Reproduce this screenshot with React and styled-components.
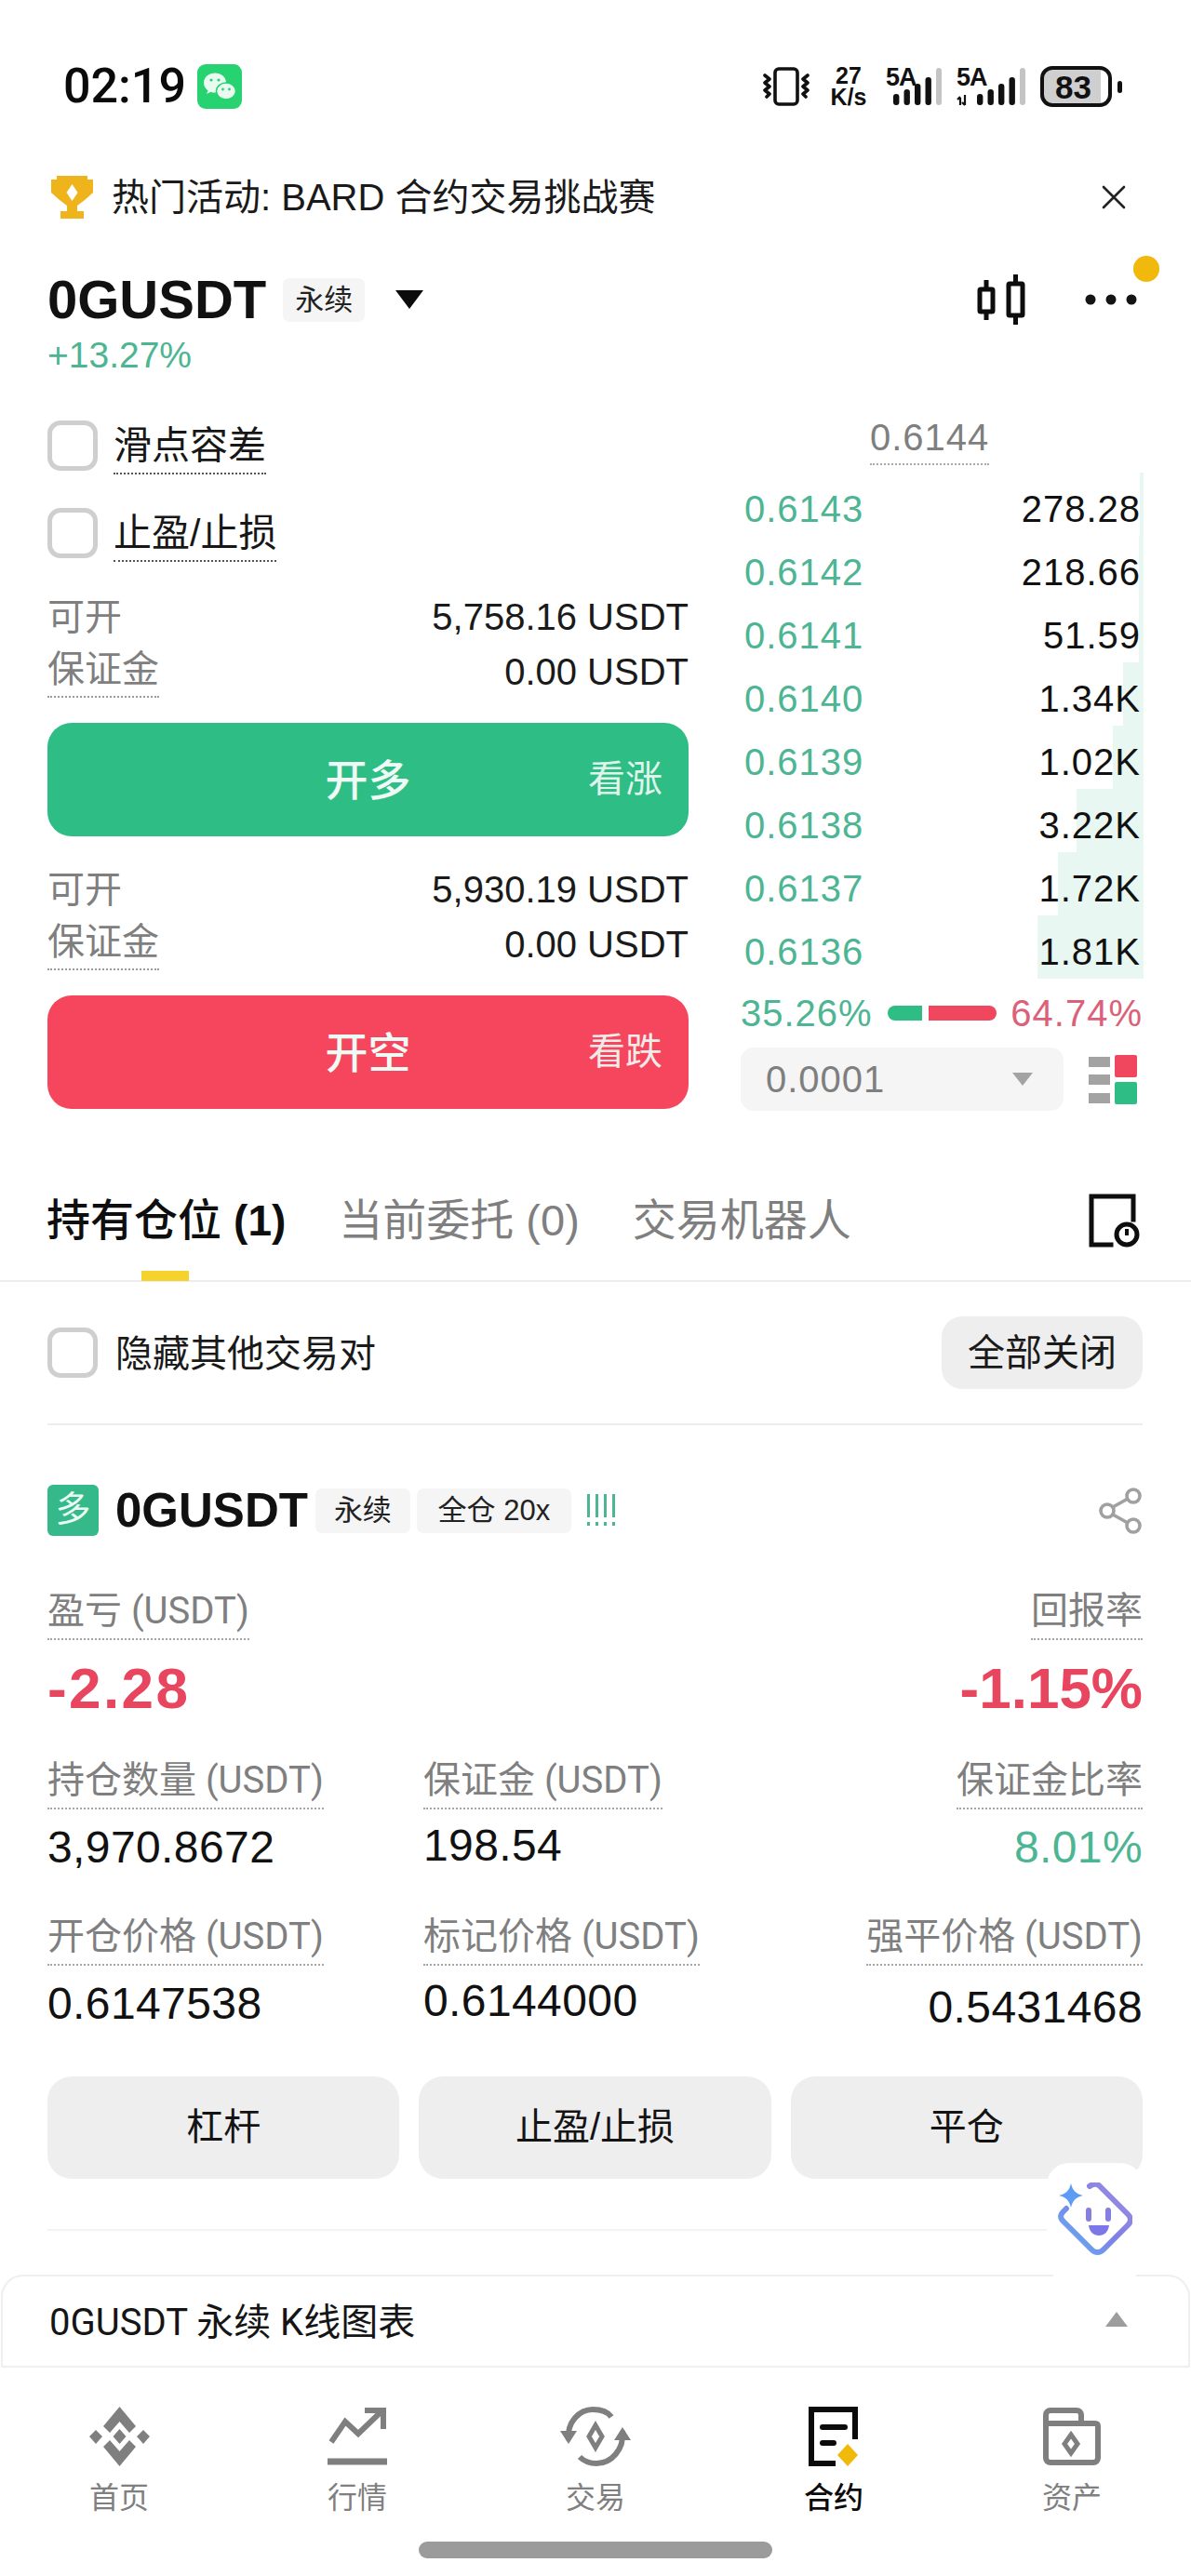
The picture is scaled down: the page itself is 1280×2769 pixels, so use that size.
import React from "react";
import styled, { createGlobalStyle } from "styled-components";

const FONT = `"Liberation Sans", "Noto Sans CJK SC", sans-serif`;
const NARROW = `Roboto, "Noto Sans CJK SC", sans-serif`;
const GRAY = "#7f7f7f";
const INK = "#111111";
const GREEN_TEXT = "#4db593";
const GREEN = "#2ebd85";
const RED = "#f6465d";

const Global = createGlobalStyle`
  html, body { margin: 0; padding: 0; background: #fff; }
  * { box-sizing: border-box; }
  body { font-family: ${FONT}; color: ${INK}; }
`;

const Page = styled.div`
  position: relative;
  width: 1280px;
  height: 2769px;
  overflow: hidden;
  background: #fff;
`;

/* status bar */
const StatusBar = styled.div`
  height: 186px;
  padding: 0 74px 0 68px;
  display: flex;
  align-items: center;
  justify-content: space-between;
`;
const TimeGroup = styled.div`
  display: flex;
  align-items: center;
  gap: 12px;
`;
const Time = styled.div`
  font-family: Roboto, sans-serif;
  font-size: 52px;
  font-weight: 500;
  line-height: 52px;
  color: #0a0a0a;
`;
const StatusIcons = styled.div`
  display: flex;
  align-items: center;
  height: 48px;
`;
const Speed = styled.div`
  width: 44px;
  margin: 0 18px 0 20px;
  text-align: center;
  font-size: 25px;
  font-weight: 700;
  line-height: 23px;
  white-space: nowrap;
`;
const SignalGroup = styled.div`
  position: relative;
  width: ${(p) => p.$w}px;
  height: 44px;
  margin-right: ${(p) => p.$mr}px;
`;
const SignalLabel = styled.span`
  position: absolute;
  left: 0;
  top: 0;
  font-size: 27px;
  font-weight: 700;
  line-height: 25px;
  letter-spacing: -1px;
`;
const Battery = styled.div`
  width: 77px;
  height: 44px;
  border: 4px solid #111;
  border-radius: 13px;
  background: linear-gradient(90deg, #cfcfcf 88%, #fff 88%);
  display: flex;
  align-items: center;
  justify-content: center;
  font-size: 35px;
  font-weight: 700;
  line-height: 1;
  padding-right: 6px;
`;
const BatteryTip = styled.div`
  width: 5px;
  height: 13px;
  margin-left: 6px;
  border-radius: 3px;
  background: #111;
`;

/* banner */
const Banner = styled.div`
  height: 52px;
  padding: 0 70px 0 55px;
  display: flex;
  align-items: center;
`;
const BannerText = styled.div`
  margin-left: 20px;
  font-size: 40px;
  line-height: 52px;
  color: #1a1a1a;
  white-space: nowrap;
`;
const BannerClose = styled.div`
  margin-left: auto;
  display: flex;
`;

/* title */
const TitleRow = styled.div`
  position: relative;
  height: 80px;
  margin-top: 44px;
  padding: 0 58px 0 51px;
  display: flex;
  align-items: center;
`;
const Symbol = styled.div`
  font-size: 58px;
  font-weight: 700;
  line-height: 60px;
`;
const MarketBadge = styled.div`
  margin-left: 18px;
  width: 88px;
  height: 47px;
  border-radius: 7px;
  background: #f5f5f5;
  font-size: 31px;
  line-height: 47px;
  text-align: center;
  color: #222;
`;
const Caret = styled.div`
  margin-left: 33px;
  width: 0;
  height: 0;
  border-left: 15px solid transparent;
  border-right: 15px solid transparent;
  border-top: 20px solid #0b0b0b;
`;
const TitleActions = styled.div`
  margin-left: auto;
  display: flex;
  align-items: center;
  gap: 64px;
`;
const NoticeDot = styled.div`
  position: absolute;
  left: 1218px;
  top: -7px;
  width: 28px;
  height: 28px;
  border-radius: 50%;
  background: #f0b90b;
`;
const Change = styled.div`
  height: 40px;
  padding-left: 51px;
  font-size: 39px;
  line-height: 40px;
  color: ${GREEN_TEXT};
`;

/* trade */
const TradeGrid = styled.div`
  margin-top: 50px;
  padding: 0 52px 0 51px;
  display: grid;
  grid-template-columns: 689px 432px;
  column-gap: 56px;
`;
const FormColumn = styled.div`
  display: flex;
  flex-direction: column;
`;
const CheckRow = styled.div`
  display: flex;
  align-items: flex-start;
  height: 54px;
  margin-bottom: ${(p) => p.$mb || 0}px;
`;
const Checkbox = styled.div`
  flex: none;
  width: 54px;
  height: 54px;
  border: 5px solid #cfcfcf;
  border-radius: 14px;
  background: #fff;
`;
const CheckLabel = styled.span`
  margin: 6px 0 0 17px;
  height: 52px;
  font-size: 41px;
  line-height: 42px;
  border-bottom: 2px dotted #555;
  color: #171717;
  white-space: nowrap;
`;
const InfoRow = styled.div`
  display: flex;
  align-items: flex-start;
  justify-content: space-between;
  height: ${(p) => p.$h}px;
`;
const InfoLabel = styled.span`
  font-size: 40px;
  line-height: 40px;
  color: ${GRAY};
  ${(p) => p.$dotted && `padding-bottom: 9px; border-bottom: 2px dotted #9a9a9a;`}
`;
const InfoValue = styled.span`
  font-size: 40px;
  line-height: 40px;
  color: #1a1a1a;
  margin-top: ${(p) => p.$top || 0}px;
`;
const TradeButton = styled.div`
  position: relative;
  height: 122px;
  margin-bottom: ${(p) => p.$mb || 0}px;
  padding-bottom: 7px;
  border-radius: 26px;
  background: ${(p) => p.$bg};
  display: flex;
  align-items: center;
  justify-content: center;
  color: #eefaf5;
  font-size: 46px;
  font-weight: 500;
`;
const TradeHint = styled.span`
  position: absolute;
  right: 28px;
  top: 38px;
  font-size: 40px;
  font-weight: 400;
  line-height: 44px;
  opacity: 0.92;
`;

/* order book */
const BookColumn = styled.div`
  display: flex;
  flex-direction: column;
`;
const MidWrap = styled.div`
  height: 56px;
  padding-left: 139px;
`;
const MidPrice = styled.span`
  display: inline-block;
  font-size: 40px;
  line-height: 36px;
  letter-spacing: 1px;
  color: ${GRAY};
  padding-bottom: 10px;
  border-bottom: 2px dotted #aaa;
`;
const BookRow = styled.div`
  position: relative;
  height: 68px;
  padding: 10px 2px 0 4px;
  display: flex;
  align-items: center;
  justify-content: space-between;
  font-size: 40px;
  letter-spacing: 1px;
`;
const DepthBar = styled.div`
  position: absolute;
  top: 0;
  bottom: 0;
  right: -1px;
  background: #e9f7f2;
`;
const BookCell = styled.span`
  position: relative;
  color: ${(p) => p.$color};
`;
const RatioRow = styled.div`
  height: 74px;
  display: flex;
  align-items: center;
  font-size: 40px;
`;
const RatioText = styled.span`
  margin-left: ${(p) => p.$ml || 0}px;
  color: ${(p) => p.$color};
  letter-spacing: 1px;
`;
const RatioBar = styled.div`
  width: ${(p) => p.$w}px;
  height: 16px;
  margin-left: ${(p) => p.$ml}px;
  background: ${(p) => p.$bg};
  border-radius: ${(p) => p.$radius};
`;
const SelectRow = styled.div`
  display: flex;
  align-items: center;
  justify-content: space-between;
  height: 68px;
  padding-right: 6px;
`;
const Select = styled.div`
  width: 347px;
  height: 68px;
  padding: 0 33px 0 27px;
  border-radius: 14px;
  background: #f5f5f5;
  display: flex;
  align-items: center;
  justify-content: space-between;
  font-size: 40px;
  letter-spacing: 1px;
  color: ${GRAY};
`;
const SelectCaret = styled.div`
  width: 0;
  height: 0;
  border-left: 11px solid transparent;
  border-right: 11px solid transparent;
  border-top: 14px solid #a3a3a3;
`;

/* tabs */
const TabsRow = styled.div`
  position: relative;
  height: 98px;
  margin-top: 86px;
  padding: 0 55px 33px 50px;
  border-bottom: 2px solid #ededed;
  display: flex;
  align-items: center;
  gap: 57px;
`;
const Tab = styled.div`
  font-size: 47px;
  line-height: 60px;
  font-weight: ${(p) => (p.$active ? 500 : 400)};
  color: ${(p) => (p.$active ? "#0e0e0e" : GRAY)};
  white-space: nowrap;
`;
const TabCount = styled.span`
  font-weight: 700;
  font-size: 46px;
`;
const TabIndicator = styled.div`
  position: absolute;
  left: 152px;
  bottom: -1px;
  width: 51px;
  height: 11px;
  background: #f5d22c;
`;
const TabAction = styled.div`
  margin-left: auto;
  display: flex;
`;

const HideRow = styled.div`
  height: 154px;
  margin: 0 52px 0 51px;
  border-bottom: 2px solid #ededed;
  display: flex;
  align-items: center;
  justify-content: space-between;
`;
const HideLeft = styled.div`
  display: flex;
  align-items: center;
`;
const HideText = styled.span`
  margin-left: 19px;
  font-size: 40px;
  margin-top: -4px;
  color: #1a1a1a;
`;
const CloseAll = styled.div`
  width: 216px;
  height: 78px;
  border-radius: 22px;
  background: #eeeeee;
  text-align: center;
  line-height: 78px;
  font-size: 40px;
  color: #1a1a1a;
`;

/* position */
const PositionCard = styled.div`
  padding: 64px 52px 0 51px;
`;
const PosHeader = styled.div`
  height: 55px;
  display: flex;
  align-items: center;
`;
const SideTag = styled.div`
  width: 55px;
  height: 55px;
  border-radius: 6px;
  background: #35b98a;
  color: #e9fbf3;
  font-size: 38px;
  line-height: 53px;
  text-align: center;
`;
const PosSymbol = styled.div`
  margin-left: 18px;
  font-size: 51px;
  font-weight: 700;
  line-height: 55px;
`;
const PosBadge = styled.div`
  margin-left: ${(p) => p.$ml}px;
  width: ${(p) => p.$w}px;
  height: 48px;
  border-radius: 7px;
  background: #f5f5f5;
  text-align: center;
  font-size: 31px;
  line-height: 47px;
  color: #222;
  white-space: nowrap;
`;
const Bang = styled.div`
  margin-left: 17px;
  display: flex;
  gap: 6px;
  height: 35px;
`;
const BangMark = styled.span`
  position: relative;
  width: 3px;
  height: 25px;
  background: ${GREEN_TEXT};
  &::after {
    content: "";
    position: absolute;
    left: 0;
    top: 30px;
    width: 3px;
    height: 4px;
    background: ${GREEN_TEXT};
  }
`;
const PosShare = styled.div`
  margin-left: auto;
  display: flex;
`;
const StatGrid = styled.div`
  margin-top: 61px;
  display: grid;
  grid-template-columns: 404px 1fr 1fr;
  row-gap: 49px;
`;
const StatCell = styled.div`
  display: flex;
  flex-direction: column;
  align-items: ${(p) => (p.$end ? "flex-end" : "flex-start")};
  grid-column: ${(p) => p.$col || "auto"};
`;
const StatLabel = styled.span`
  font-family: ${NARROW};
  font-size: 40px;
  line-height: 40px;
  padding-bottom: 9px;
  border-bottom: 2px dotted #a5a5a5;
  color: ${GRAY};
  white-space: nowrap;
`;
const BigValue = styled.span`
  margin-top: 22px;
  font-size: 62px;
  font-weight: 700;
  line-height: 60px;
  letter-spacing: ${(p) => p.$spread || 0}px;
  color: #e8455f;
`;
const StatValue = styled.span`
  margin-top: ${(p) => 14 + (p.$shift || 0)}px;
  margin-bottom: ${(p) => -(p.$shift || 0)}px;
  font-size: 48px;
  line-height: 54px;
  letter-spacing: 0.4px;
  color: ${(p) => p.$color || INK};
`;
const ActionGrid = styled.div`
  margin-top: 51px;
  display: grid;
  grid-template-columns: repeat(3, 1fr);
  column-gap: 21px;
`;
const ActionButton = styled.div`
  height: 110px;
  border-radius: 26px;
  background: #eeeeee;
  text-align: center;
  line-height: 108px;
  font-size: 40px;
  color: #141414;
`;
const Divider = styled.div`
  height: 2px;
  margin-top: 54px;
  background: #f3f3f3;
`;

const FloatAssist = styled.div`
  position: absolute;
  left: 1125px;
  top: 2325px;
  width: 103px;
  height: 128px;
  border-radius: 24px;
  background: #fff;
  display: flex;
  justify-content: center;
  padding-top: 21px;
`;

/* chart panel */
const ChartPanel = styled.div`
  height: 100px;
  margin: 47px 1px 0;
  padding: 0 65px 5px 50px;
  border: 2px solid #efefef;
  border-radius: 24px 24px 0 0;
  display: flex;
  align-items: center;
  justify-content: space-between;
  font-family: ${NARROW};
  font-size: 40px;
  color: #151515;
`;
const PanelCaret = styled.div`
  width: 0;
  height: 0;
  border-left: 12px solid transparent;
  border-right: 12px solid transparent;
  border-bottom: 16px solid #9d9d9d;
`;

/* nav */
const NavBar = styled.div`
  padding-top: 42px;
  display: grid;
  grid-template-columns: repeat(5, 1fr);
`;
const NavItem = styled.div`
  display: flex;
  flex-direction: column;
  align-items: center;
  color: ${(p) => (p.$active ? "#0b0b0b" : GRAY)};
  font-size: 32px;
  font-weight: ${(p) => (p.$active ? 500 : 400)};
  line-height: 36px;
`;
const NavIcon = styled.div`
  height: 66px;
  margin-bottom: 14px;
  display: flex;
  align-items: flex-start;
`;
const HomeBar = styled.div`
  width: 380px;
  height: 18px;
  margin: 29px auto 0;
  border-radius: 9px;
  background: #9b9b9b;
`;

/* drawings */
const Wechat = () => (
  <svg width="48" height="48" viewBox="0 0 48 48">
    <rect width="48" height="48" rx="9" fill="#27d271" />
    <ellipse cx="19" cy="20" rx="12" ry="10.5" fill="#e9fbf0" />
    <path d="M12 27l-2 5 6-3z" fill="#e9fbf0" />
    <ellipse cx="31" cy="29" rx="10.5" ry="9" fill="#e9fbf0" stroke="#27d271" strokeWidth="1.5" />
    <circle cx="15" cy="17" r="1.6" fill="#27d271" />
    <circle cx="23" cy="17" r="1.6" fill="#27d271" />
    <circle cx="27.5" cy="27" r="1.4" fill="#27d271" />
    <circle cx="34.5" cy="27" r="1.4" fill="#27d271" />
  </svg>
);
const Vibrate = () => (
  <svg width="50" height="42" viewBox="0 0 50 42" fill="none" stroke="#111" strokeWidth="3.6" strokeLinecap="round" strokeLinejoin="round">
    <rect x="13" y="2" width="24" height="38" rx="4" />
    <path d="M2 9l5 4-5 4 5 4-5 4 5 4-3 3" />
    <path d="M48 9l-5 4 5 4-5 4 5 4-5 4 3 3" />
  </svg>
);
const Bars = ({ offset = 8, arrows = false }) => {
  const hs = [12, 17, 23, 30];
  return (
    <svg width="78" height="44" viewBox="0 0 78 44" style={{ position: "absolute", left: 0, top: 0 }}>
      {arrows && <path d="M4 34v8M9 31v11M9 42l-3-3M1 36l3-3" stroke="#111" strokeWidth="2.2" fill="none" />}
      {hs.map((h, i) => (
        <rect key={i} x={offset + i * 11.5} y={42 - h} width="6.4" height={h} rx="3" fill="#111" />
      ))}
      <rect x={offset + 46} y="2" width="6" height="40" rx="3" fill="#c4c4c4" />
    </svg>
  );
};
const Trophy = () => (
  <svg width="45" height="46" viewBox="0 0 45 46">
    <path d="M6 0h33v4h6v14l-9 8-8 6v6h7v8H10v-8h7v-6l-8-6-9-8V4h6z" fill="#efb31c" />
    <path d="M22.5 9l6 9-6 9-6-9z" fill="#fff" />
  </svg>
);
const Close = () => (
  <svg width="26" height="26" viewBox="0 0 26 26" stroke="#222" strokeWidth="2.6" strokeLinecap="round">
    <path d="M2 2l22 22M24 2L2 24" />
  </svg>
);
const Candles = () => (
  <svg width="52" height="54" viewBox="0 0 52 54" fill="none" stroke="#0d0d0d" strokeWidth="5">
    <rect x="3" y="16" width="14" height="24" rx="1" />
    <rect x="34" y="10" width="15" height="34" rx="1" />
    <path d="M10 6v10M10 40v9M41.500 0v10M41.500 44v10" />
  </svg>
);
const Dots = () => (
  <svg width="56" height="14" viewBox="0 0 56 14" fill="#141414">
    <circle cx="6" cy="7" r="5.500" />
    <circle cx="28" cy="7" r="5.500" />
    <circle cx="50" cy="7" r="5.500" />
  </svg>
);
const LayoutIcon = () => (
  <svg width="52" height="53" viewBox="0 0 52 53">
    <rect x="0" y="2" width="23" height="11" fill="#a3a3a3" />
    <rect x="0" y="21" width="23" height="11" fill="#a3a3a3" />
    <rect x="0" y="41" width="23" height="11" fill="#a3a3a3" />
    <rect x="28" y="0" width="24" height="24" rx="2" fill="#f0465e" />
    <rect x="28" y="29" width="24" height="24" rx="2" fill="#2ebd85" />
  </svg>
);
const HistoryIcon = () => (
  <svg width="55" height="58" viewBox="0 0 55 58" fill="none" stroke="#0e0e0e" strokeWidth="5">
    <path d="M24 55H3V3h45v25" strokeLinecap="square" />
    <circle cx="41" cy="44" r="11" />
    <path d="M41 38v7" strokeWidth="4" />
  </svg>
);
const Share = () => (
  <svg width="47" height="50" viewBox="0 0 47 50" fill="none" stroke="#a0a0a0" strokeWidth="3.6">
    <circle cx="37" cy="9" r="7" />
    <circle cx="9" cy="25" r="7" />
    <circle cx="37" cy="41" r="7" />
    <path d="M15 21l16-9M15 29l16 9" />
  </svg>
);
const Assist = () => (
  <svg width="80" height="78" viewBox="0 0 80 78" fill="none">
    <defs>
      <linearGradient id="assistLine" x1="0" y1="1" x2="1" y2="0">
        <stop offset="0" stopColor="#5fb6f2" />
        <stop offset="0.5" stopColor="#7f7fe6" />
        <stop offset="1" stopColor="#a08fe0" />
      </linearGradient>
    </defs>
    <path
      d="M34 4c4-3 8-3 11 0l30 30c4 4 4 8 0 12L49 72c-4 4-9 4-13 0L6 42c-4-4-4-7 0-11l3-3"
      stroke="url(#assistLine)"
      strokeWidth="6"
      strokeLinecap="round"
    />
    <path d="M14 1c2 8 5 11 13 13-8 2-11 5-13 13-2-8-5-11-13-13 8-2 11-5 13-13z" fill="#5c9cf5" />
    <rect x="30" y="27" width="6" height="15" rx="3" fill="#8580e0" />
    <rect x="51" y="27" width="6" height="15" rx="3" fill="#8580e0" />
    <path d="M33 46h22c-1 7-5 11-11 11s-10-4-11-11z" fill="#7d78ea" />
  </svg>
);
const HomeIcon = () => (
  <svg width="65" height="64" viewBox="0 0 65 64" fill={GRAY}>
    <path d="M32.500 0L50 21l-7 7-10.500-12L22 28l-7-7z" />
    <path d="M7 25l7 7-7 8-7-8zM58 25l7 7-7 8-7-8zM32.500 24l7 8-7 8-7-8z" />
    <path d="M15 43l7-7 10.500 12L43 36l7 7-17.500 21z" />
  </svg>
);
const MarketIcon = () => (
  <svg width="64" height="64" viewBox="0 0 64 64" fill="none" stroke={GRAY} strokeWidth="6">
    <path d="M4 38l15-22 14 13L58 5" />
    <path d="M40 4h20v20" strokeWidth="6" />
    <path d="M1 59h62" strokeWidth="7" strokeLinecap="round" />
  </svg>
);
const TradeIcon = () => (
  <svg width="78" height="64" viewBox="0 0 78 64" fill="none" stroke={GRAY} strokeWidth="6">
    <path d="M10 36C8 16 22 3 36 3c8 0 16 2 20 8" />
    <path d="M68 26c2 20-12 35-28 35-8 0-14-3-18-7" />
    <path d="M1 26h18l-9 14z" fill={GRAY} stroke="none" />
    <path d="M59 36l9-14 9 14z" fill={GRAY} stroke="none" />
    <path d="M39 20l7 12-7 12-7-12z" strokeWidth="5" />
  </svg>
);
const ContractIcon = () => (
  <svg width="54" height="64" viewBox="0 0 54 64" fill="none">
    <path d="M29 61H3V3h47v32" stroke="#0b0b0b" strokeWidth="6" />
    <path d="M15 22h24M15 39h12" stroke="#0b0b0b" strokeWidth="6" strokeLinecap="round" />
    <path d="M42 40l11 12-11 12-11-12z" fill="#f0b90b" />
  </svg>
);
const WalletIcon = () => (
  <svg width="62" height="64" viewBox="0 0 62 64" fill="none" stroke={GRAY} strokeWidth="6">
    <path d="M3 20V9c0-3 2-5 5-5h28c3 0 5 2 5 5v7" />
    <path d="M3 18h53c2 0 3 1 3 3v34c0 3-2 5-5 5H8c-3 0-5-2-5-5z" />
    <path d="M30 30l7 10-7 10-7-10z" strokeWidth="5" />
  </svg>
);

const ORDERS = [
  ["0.6143", "278.28", 4],
  ["0.6142", "218.66", 5],
  ["0.6141", "51.59", 5],
  ["0.6140", "1.34K", 22],
  ["0.6139", "1.02K", 33],
  ["0.6138", "3.22K", 72],
  ["0.6137", "1.72K", 92],
  ["0.6136", "1.81K", 114],
];

const NAV = [
  ["首页", <HomeIcon key="h" />],
  ["行情", <MarketIcon key="m" />],
  ["交易", <TradeIcon key="t" />],
  ["合约", <ContractIcon key="c" />, true],
  ["资产", <WalletIcon key="w" />],
];

const OrderGroup = ({ available, bg, label, hint, gap }) => (
  <>
    <InfoRow $h={56}>
      <InfoLabel>可开</InfoLabel>
      <InfoValue>{available} USDT</InfoValue>
    </InfoRow>
    <InfoRow $h={78}>
      <InfoLabel $dotted>保证金</InfoLabel>
      <InfoValue $top={3}>0.00 USDT</InfoValue>
    </InfoRow>
    <TradeButton $bg={bg} $mb={gap}>
      {label}
      <TradeHint>{hint}</TradeHint>
    </TradeButton>
  </>
);

export default function App() {
  return (
    <Page>
      <Global />
      <StatusBar>
        <TimeGroup>
          <Time>02:19</Time>
          <Wechat />
        </TimeGroup>
        <StatusIcons>
          <Vibrate />
          <Speed>
            27
            <br />
            K/s
          </Speed>
          <SignalGroup $w={62} $mr={14}>
            <Bars offset={8} />
            <SignalLabel>5A</SignalLabel>
          </SignalGroup>
          <SignalGroup $w={78} $mr={12}>
            <Bars offset={22} arrows />
            <SignalLabel>5A</SignalLabel>
          </SignalGroup>
          <Battery>83</Battery>
          <BatteryTip />
        </StatusIcons>
      </StatusBar>

      <Banner>
        <Trophy />
        <BannerText>热门活动: BARD 合约交易挑战赛</BannerText>
        <BannerClose>
          <Close />
        </BannerClose>
      </Banner>

      <TitleRow>
        <Symbol>0GUSDT</Symbol>
        <MarketBadge>永续</MarketBadge>
        <Caret />
        <TitleActions>
          <Candles />
          <Dots />
        </TitleActions>
        <NoticeDot />
      </TitleRow>
      <Change>+13.27%</Change>

      <TradeGrid>
        <FormColumn>
          <CheckRow $mb={40}>
            <Checkbox />
            <CheckLabel>滑点容差</CheckLabel>
          </CheckRow>
          <CheckRow $mb={43}>
            <Checkbox />
            <CheckLabel>止盈/止损</CheckLabel>
          </CheckRow>
          <OrderGroup available="5,758.16" bg={GREEN} label="开多" hint="看涨" gap={37} />
          <OrderGroup available="5,930.19" bg={RED} label="开空" hint="看跌" gap={0} />
        </FormColumn>
        <BookColumn>
          <MidWrap>
            <MidPrice>0.6144</MidPrice>
          </MidWrap>
          {ORDERS.map(([price, qty, depth]) => (
            <BookRow key={price}>
              <DepthBar style={{ width: depth }} />
              <BookCell $color={GREEN_TEXT}>{price}</BookCell>
              <BookCell $color="#111">{qty}</BookCell>
            </BookRow>
          ))}
          <RatioRow>
            <RatioText $color={GREEN_TEXT}>35.26%</RatioText>
            <RatioBar $w={38} $ml={16} $bg={GREEN} $radius="8px 0 0 8px" />
            <RatioBar $w={75} $ml={7} $bg="#f0465e" $radius="0 8px 8px 0" />
            <RatioText $color="#dc6079" $ml={15}>
              64.74%
            </RatioText>
          </RatioRow>
          <SelectRow>
            <Select>
              0.0001
              <SelectCaret />
            </Select>
            <LayoutIcon />
          </SelectRow>
        </BookColumn>
      </TradeGrid>

      <TabsRow>
        <Tab $active>
          持有仓位 <TabCount>(1)</TabCount>
        </Tab>
        <Tab>当前委托 (0)</Tab>
        <Tab>交易机器人</Tab>
        <TabAction>
          <HistoryIcon />
        </TabAction>
        <TabIndicator />
      </TabsRow>

      <HideRow>
        <HideLeft>
          <Checkbox />
          <HideText>隐藏其他交易对</HideText>
        </HideLeft>
        <CloseAll>全部关闭</CloseAll>
      </HideRow>

      <PositionCard>
        <PosHeader>
          <SideTag>多</SideTag>
          <PosSymbol>0GUSDT</PosSymbol>
          <PosBadge $ml={8} $w={102}>永续</PosBadge>
          <PosBadge $ml={7} $w={166}>全仓 20x</PosBadge>
          <Bang>
            <BangMark />
            <BangMark />
            <BangMark />
            <BangMark />
          </Bang>
          <PosShare>
            <Share />
          </PosShare>
        </PosHeader>
        <StatGrid>
          <StatCell>
            <StatLabel>盈亏 (USDT)</StatLabel>
            <BigValue $spread={2.4}>-2.28</BigValue>
          </StatCell>
          <StatCell $end $col="3">
            <StatLabel>回报率</StatLabel>
            <BigValue>-1.15%</BigValue>
          </StatCell>
          <StatCell>
            <StatLabel>持仓数量 (USDT)</StatLabel>
            <StatValue>3,970.8672</StatValue>
          </StatCell>
          <StatCell>
            <StatLabel>保证金 (USDT)</StatLabel>
            <StatValue $shift={-2}>198.54</StatValue>
          </StatCell>
          <StatCell $end>
            <StatLabel>保证金比率</StatLabel>
            <StatValue $color={GREEN_TEXT}>8.01%</StatValue>
          </StatCell>
          <StatCell>
            <StatLabel>开仓价格 (USDT)</StatLabel>
            <StatValue>0.6147538</StatValue>
          </StatCell>
          <StatCell>
            <StatLabel>标记价格 (USDT)</StatLabel>
            <StatValue $shift={-3}>0.6144000</StatValue>
          </StatCell>
          <StatCell $end>
            <StatLabel>强平价格 (USDT)</StatLabel>
            <StatValue $shift={4}>0.5431468</StatValue>
          </StatCell>
        </StatGrid>
        <ActionGrid>
          <ActionButton>杠杆</ActionButton>
          <ActionButton>止盈/止损</ActionButton>
          <ActionButton>平仓</ActionButton>
        </ActionGrid>
        <Divider />
      </PositionCard>

      <ChartPanel>
        <span>0GUSDT 永续 K线图表</span>
        <PanelCaret />
      </ChartPanel>

      <NavBar>
        {NAV.map(([label, icon, active]) => (
          <NavItem key={label} $active={active}>
            <NavIcon>{icon}</NavIcon>
            {label}
          </NavItem>
        ))}
      </NavBar>
      <HomeBar />

      <FloatAssist>
        <Assist />
      </FloatAssist>
    </Page>
  );
}
